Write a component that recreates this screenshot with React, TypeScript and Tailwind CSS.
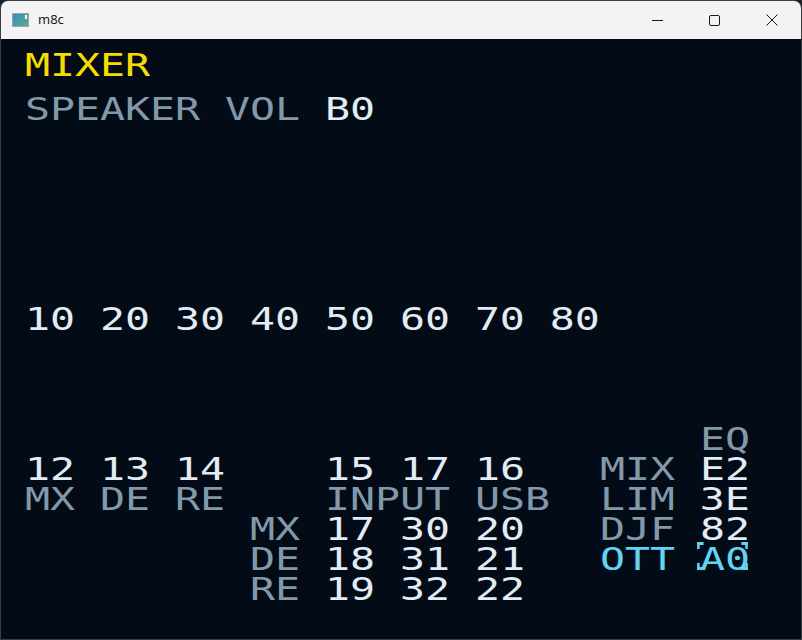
import React from 'react';

const mono = { fontFamily: '"DejaVu Sans Mono", "Liberation Mono", monospace' };

// the screen is drawn at 1.3x horizontal stretch, so one 25px cell is 25 / 1.3 before it
const CELL = 25 / 1.3;

type Tone = 'g' | 'w' | 'c' | 'sel';
type Seg = [number, string, Tone?];

const tones: Record<string, string> = {
  g: 'text-[#8399aa]',
  w: 'text-[#e3ecf4]',
  c: 'text-[#63d3f2]',
  sel: 'text-[#63d3f2]',
};

function Row({ segs }: { segs: Seg[] }) {
  let cur = 0;
  return (
    <div className="flex h-[30px] leading-[30px] whitespace-pre text-[32px] tracking-[-0.04px]">
      {segs.map(([col, t, tone = 'w'], i) => {
        const gap = (col - cur) * CELL;
        cur = col + t.length;
        return (
          <span key={i} className={`relative ${tones[tone]}`} style={{ marginLeft: gap }}>
            {t}
            {tone === 'sel' && (
              <>
                <span className="absolute left-[-2.5px] top-[-2px] w-[5px] h-[7px] border-l-[2px] border-t-[3px] border-[#63d3f2]" />
                <span className="absolute right-[1.5px] top-[-2px] w-[5px] h-[7px] border-r-[2px] border-t-[3px] border-[#63d3f2]" />
                <span className="absolute left-[-2.5px] bottom-[4px] w-[5px] h-[7px] border-l-[2px] border-b-[3px] border-[#63d3f2]" />
                <span className="absolute right-[1.5px] bottom-[4px] w-[5px] h-[7px] border-r-[2px] border-b-[3px] border-[#63d3f2]" />
              </>
            )}
          </span>
        );
      })}
    </div>
  );
}

const rows: Seg[][] = [
  [[0, 'SPEAKER VOL', 'g'], [12, 'B0']],
  [],
  [],
  [],
  [],
  [],
  [],
  [[0, '10 20 30 40 50 60 70 80']],
  [],
  [],
  [],
  [[27, 'EQ', 'g']],
  [[0, '12 13 14'], [12, '15 17 16'], [23, 'MIX', 'g'], [27, 'E2']],
  [[0, 'MX DE RE', 'g'], [12, 'INPUT USB', 'g'], [23, 'LIM', 'g'], [27, '3E']],
  [[9, 'MX', 'g'], [12, '17 30 20'], [23, 'DJF', 'g'], [27, '82']],
  [[9, 'DE', 'g'], [12, '18 31 21'], [23, 'OTT', 'c'], [27, 'A0', 'sel']],
  [[9, 'RE', 'g'], [12, '19 32 22']],
];

export default function App() {
  return (
    <div className="w-[802px] h-[640px] bg-[#1c1f24] overflow-hidden">
      <div className="w-full h-full flex flex-col rounded-t-[8px] overflow-hidden border border-[#3a3d42]">
        <div className="h-[38px] bg-[#f3f3f3] flex items-center shrink-0">
          <div className="ml-[11px] w-[17px] h-[14px] border border-[#9aa3ad] bg-gradient-to-br from-[#3f86c6] to-[#58b07a] relative">
            <span className="absolute right-[1px] top-[1px] w-[2px] h-[4px] bg-white" />
          </div>
          <span className="ml-[9px] text-[13px] text-[#1a1a1a]" style={{ fontFamily: '"Noto Sans", "Open Sans", sans-serif' }}>
            m8c
          </span>
          <div className="ml-auto flex items-center h-full">
            <div className="w-[57px] h-full flex items-center justify-center">
              <span className="w-[11px] h-[1px] bg-[#1a1a1a]" />
            </div>
            <div className="w-[57px] h-full flex items-center justify-center">
              <span className="w-[11px] h-[11px] border border-[#1a1a1a] rounded-[2px]" />
            </div>
            <div className="w-[58px] h-full flex items-center justify-center">
              <svg width="12" height="12" viewBox="0 0 12 12">
                <path d="M0.5 0.5 L11.5 11.5 M11.5 0.5 L0.5 11.5" stroke="#1a1a1a" strokeWidth="1" />
              </svg>
            </div>
          </div>
        </div>
        <div className="flex-1 bg-[#020b16] pl-[24px] pt-[11px]" style={mono}>
          <div className="origin-left scale-x-[1.3]">
            <div className="h-[30px] leading-[30px] text-[32px] tracking-[-0.04px] text-[#f7dc00]">MIXER</div>
            <div className="mt-[14px]">
              {rows.map((r, i) => (
                <Row key={i} segs={r} />
              ))}
            </div>
          </div>
        </div>
      </div>
    </div>
  );
}
